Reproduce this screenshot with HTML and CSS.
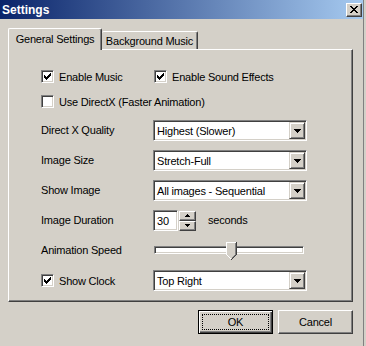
FILE: index.html
```html
<!DOCTYPE html>
<html>
<head>
<meta charset="utf-8">
<link rel="stylesheet" href="styles.css">
</head>
<body>
<div class="window">
  <div class="titlebar">
    <span class="title">Settings</span>
    <span class="close">
      <svg width="8" height="7" viewBox="0 0 8 7" shape-rendering="crispEdges"><path d="M0 0h2v1h-2zM6 0h2v1h-2zM1 1h2v1h-2zM5 1h2v1h-2zM2 2h4v1h-4zM3 3h2v1h-2zM2 4h4v1h-4zM1 5h2v1h-2zM5 5h2v1h-2zM0 6h2v1h-2zM6 6h2v1h-2z" fill="#000"/></svg>
    </span>
  </div>
  <div class="client">
    <div class="tabs">
      <div class="tab active">General Settings</div>
      <div class="tab">Background Music</div>
    </div>
    <div class="panel">
      <div class="row checks">
        <div class="check wide"><span class="box"><svg width="7" height="7" viewBox="0 0 7 7" shape-rendering="crispEdges"><path d="M0 2h1v3h-1zM1 3h1v3h-1zM2 4h1v3h-1zM3 3h1v3h-1zM4 2h1v3h-1zM5 1h1v3h-1zM6 0h1v3h-1z" fill="#000"/></svg></span>Enable Music</div>
        <div class="check"><span class="box"><svg width="7" height="7" viewBox="0 0 7 7" shape-rendering="crispEdges"><path d="M0 2h1v3h-1zM1 3h1v3h-1zM2 4h1v3h-1zM3 3h1v3h-1zM4 2h1v3h-1zM5 1h1v3h-1zM6 0h1v3h-1z" fill="#000"/></svg></span>Enable Sound Effects</div>
      </div>
      <div class="row checks gap12">
        <div class="check"><span class="box"></span>Use DirectX (Faster Animation)</div>
      </div>
      <div class="row field gap12">
        <span class="lbl">Direct X Quality</span>
        <div class="combo"><span class="val">Highest (Slower)</span><span class="ddbtn"><svg width="7" height="4" viewBox="0 0 7 4" shape-rendering="crispEdges"><path d="M0 0h7v1h-7zM1 1h5v1h-5zM2 2h3v1h-3zM3 3h1v1h-1z" fill="#000"/></svg></span></div>
      </div>
      <div class="row field">
        <span class="lbl">Image Size</span>
        <div class="combo"><span class="val">Stretch-Full</span><span class="ddbtn"><svg width="7" height="4" viewBox="0 0 7 4" shape-rendering="crispEdges"><path d="M0 0h7v1h-7zM1 1h5v1h-5zM2 2h3v1h-3zM3 3h1v1h-1z" fill="#000"/></svg></span></div>
      </div>
      <div class="row field">
        <span class="lbl">Show Image</span>
        <div class="combo"><span class="val">All images - Sequential</span><span class="ddbtn"><svg width="7" height="4" viewBox="0 0 7 4" shape-rendering="crispEdges"><path d="M0 0h7v1h-7zM1 1h5v1h-5zM2 2h3v1h-3zM3 3h1v1h-1z" fill="#000"/></svg></span></div>
      </div>
      <div class="row field">
        <span class="lbl">Image Duration</span>
        <div class="spinbox">30</div>
        <div class="spinbtns">
          <span class="spin"><svg width="5" height="3" viewBox="0 0 5 3" shape-rendering="crispEdges"><path d="M2 0h1v1h-1zM1 1h3v1h-3zM0 2h5v1h-5z" fill="#000"/></svg></span>
          <span class="spin"><svg width="5" height="3" viewBox="0 0 5 3" shape-rendering="crispEdges"><path d="M0 0h5v1h-5zM1 1h3v1h-3zM2 2h1v1h-1z" fill="#000"/></svg></span>
        </div>
        <span class="unit">seconds</span>
      </div>
      <div class="row field">
        <span class="lbl">Animation Speed</span>
        <div class="slider">
          <div class="track"></div>
          <svg class="thumb" style="left:72px" width="11" height="18" viewBox="0 0 11 18" shape-rendering="crispEdges">
            <path d="M0 0H11V13L5.5 18.5L0 13Z" fill="#d4d0c8"/>
            <path d="M0 0h10v1h-10zM0 1h1v12h-1zM1 13h1v1h-1zM2 14h1v1h-1zM3 15h1v1h-1zM4 16h1v1h-1z" fill="#fff"/>
            <path d="M9 1h1v12h-1zM8 13h1v1h-1zM7 14h1v1h-1zM6 15h1v1h-1z" fill="#808080"/>
            <path d="M10 0h1v13h-1zM9 13h1v1h-1zM8 14h1v1h-1zM7 15h1v1h-1zM6 16h1v1h-1zM5 17h1v1h-1z" fill="#404040"/>
          </svg>
        </div>
      </div>
      <div class="row field">
        <div class="check lblcheck"><span class="box"><svg width="7" height="7" viewBox="0 0 7 7" shape-rendering="crispEdges"><path d="M0 2h1v3h-1zM1 3h1v3h-1zM2 4h1v3h-1zM3 3h1v3h-1zM4 2h1v3h-1zM5 1h1v3h-1zM6 0h1v3h-1z" fill="#000"/></svg></span>Show Clock</div>
        <div class="combo"><span class="val">Top Right</span><span class="ddbtn"><svg width="7" height="4" viewBox="0 0 7 4" shape-rendering="crispEdges"><path d="M0 0h7v1h-7zM1 1h5v1h-5zM2 2h3v1h-3zM3 3h1v1h-1z" fill="#000"/></svg></span></div>
      </div>
    </div>
    <div class="buttons">
      <div class="btn default"><span class="focus">OK</span></div>
      <div class="btn">Cancel</div>
    </div>
  </div>
</div>
</body>
</html>
```
FILE: styles.css
```css
html, body {
  margin: 0;
  padding: 0;
  background: #d4d0c8;
  overflow: hidden;
}
body {
  font-family: "Liberation Sans", Arial, sans-serif;
  font-size: 11px;
  letter-spacing: -0.2px;
  color: #000;
}
.window {
  width: 363px;
  height: 346px;
  border-right: 1px solid #808080;
  display: flex;
  flex-direction: column;
}
.titlebar {
  height: 19px;
  background: linear-gradient(to right, #0a246a, #a6caf0);
  display: flex;
  align-items: center;
  justify-content: space-between;
  padding: 0 1px 0 2px;
}
.title {
  color: #fff;
  font-weight: bold;
  font-size: 12px;
  letter-spacing: 0;
}
.close {
  width: 16px;
  height: 14px;
  box-sizing: border-box;
  background: #d4d0c8;
  border-top: 1px solid #fff;
  border-left: 1px solid #fff;
  border-right: 1px solid #404040;
  border-bottom: 1px solid #404040;
  box-shadow: inset -1px -1px #808080;
  display: flex;
  align-items: center;
  justify-content: center;
  padding: 0 1px 1px 0;
}
.client {
  padding-top: 9px;
  display: flex;
  flex-direction: column;
}
.tabs {
  display: flex;
  align-items: flex-end;
  height: 21px;
  margin-left: 8px;
  position: relative;
  z-index: 1;
}
.tab {
  box-sizing: border-box;
  height: 18px;
  width: 96px;
  text-align: center;
  line-height: 13px;
  padding-top: 3px;
  background: #d4d0c8;
  border-top: 1px solid #fff;
  border-right: 1px solid #404040;
  box-shadow: inset -1px 0 #808080;
  border-radius: 2px 2px 0 0;
}
.tab.active {
  height: 22px;
  width: 94px;
  margin-bottom: -1px;
  padding-top: 4px;
  border-left: 1px solid #fff;
}
.panel {
  box-sizing: border-box;
  margin-left: 8px;
  width: 345px;
  height: 253px;
  border-top: 1px solid #fff;
  border-left: 1px solid #fff;
  border-right: 1px solid #404040;
  border-bottom: 1px solid #404040;
  box-shadow: inset -1px -1px #808080;
  padding: 20px 0 0 32px;
  display: flex;
  flex-direction: column;
}
.row {
  display: flex;
  align-items: center;
}
.row.checks {
  height: 13px;
}
.row.gap12 {
  margin-top: 12px;
}
.row.field {
  height: 21px;
  margin-top: 9px;
}
.row.field.gap12 {
  margin-top: 12px;
}
.check {
  display: flex;
  align-items: center;
  gap: 5px;
  white-space: nowrap;
}
.check.wide {
  width: 113px;
}
.box {
  box-sizing: border-box;
  width: 13px;
  height: 13px;
  background: #fff;
  border-top: 1px solid #808080;
  border-left: 1px solid #808080;
  border-right: 1px solid #fff;
  border-bottom: 1px solid #fff;
  box-shadow: inset 1px 1px #404040, inset -1px -1px #d4d0c8;
  display: flex;
  align-items: center;
  justify-content: center;
  flex: none;
}
.lbl, .lblcheck {
  width: 112px;
  flex: none;
  margin-top: -2px;
}
.lblcheck {
  margin-top: 0;
}
.combo {
  box-sizing: border-box;
  width: 154px;
  height: 21px;
  background: #fff;
  border-top: 1px solid #808080;
  border-left: 1px solid #808080;
  border-right: 1px solid #fff;
  border-bottom: 1px solid #fff;
  box-shadow: inset 1px 1px #404040, inset -1px -1px #d4d0c8;
  padding: 1px 1px 1px 3px;
  display: flex;
  align-items: center;
}
.val {
  flex: 1;
  white-space: nowrap;
}
.ddbtn {
  box-sizing: border-box;
  width: 16px;
  height: 17px;
  background: #d4d0c8;
  border-top: 1px solid #d4d0c8;
  border-left: 1px solid #d4d0c8;
  border-right: 1px solid #404040;
  border-bottom: 1px solid #404040;
  box-shadow: inset 1px 1px #fff, inset -1px -1px #808080;
  display: flex;
  align-items: center;
  justify-content: center;
}
.spinbox {
  box-sizing: border-box;
  width: 25px;
  height: 21px;
  background: #fff;
  border-top: 1px solid #808080;
  border-left: 1px solid #808080;
  border-right: 1px solid #fff;
  border-bottom: 1px solid #fff;
  box-shadow: inset 1px 1px #404040, inset -1px -1px #d4d0c8;
  padding: 0 0 0 3px;
  display: flex;
  align-items: center;
}
.spinbtns {
  display: flex;
  flex-direction: column;
  margin-left: 1px;
}
.spin {
  box-sizing: border-box;
  width: 17px;
  height: 10px;
  background: #d4d0c8;
  border-top: 1px solid #fff;
  border-left: 1px solid #fff;
  border-right: 1px solid #404040;
  border-bottom: 1px solid #404040;
  box-shadow: inset -1px -1px #808080;
  display: flex;
  align-items: center;
  justify-content: center;
}
.unit {
  margin-left: 12px;
  margin-top: -2px;
}
.slider {
  position: relative;
  width: 150px;
  height: 21px;
  margin-left: 1px;
  display: flex;
  align-items: center;
}
.track {
  box-sizing: border-box;
  width: 100%;
  height: 8px;
  margin-top: -1px;
  background: #fff;
  border-top: 1px solid #808080;
  border-left: 1px solid #808080;
  border-right: 1px solid #fff;
  border-bottom: 1px solid #fff;
  box-shadow: inset 1px 1px #404040, inset -1px -1px #d4d0c8;
}
.thumb {
  position: absolute;
  top: 2px;
}
.buttons {
  display: flex;
  justify-content: flex-end;
  gap: 5px;
  margin-left: 8px;
  width: 345px;
  margin-top: 8px;
}
.btn {
  box-sizing: border-box;
  width: 75px;
  height: 24px;
  background: #d4d0c8;
  border-top: 1px solid #fff;
  border-left: 1px solid #fff;
  border-right: 1px solid #404040;
  border-bottom: 1px solid #404040;
  box-shadow: inset -1px -1px #808080;
  display: flex;
  align-items: center;
  justify-content: center;
}
.btn.default {
  border: 1px solid #000;
  box-shadow: inset 1px 1px #fff, inset -1px -1px #404040, inset -2px -2px #808080;
  padding: 3px;
  align-items: stretch;
}
.focus {
  flex: 1;
  border: 1px dotted #000;
  display: flex;
  align-items: center;
  justify-content: center;
}
```
